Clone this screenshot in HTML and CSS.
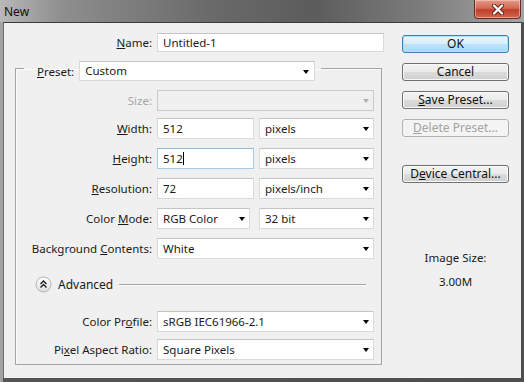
FILE: index.html
```html
<!DOCTYPE html>
<html lang="en">
<head>
    <meta charset="UTF-8">
    <meta name="viewport" content="width=device-width, initial-scale=1.0">
    <title>New</title>
    <link rel="stylesheet" href="styles.css">
</head>
<body>
    <div class="window">
        <div class="titlebar">
            <span class="title">New</span>
            <div class="close">
                <svg width="14" height="11" viewBox="0 0 14 11">
                    <path d="M3 1.5 L11 9.5 M11 1.5 L3 9.5" stroke="#5a1a10" stroke-width="4" stroke-linecap="round"/>
                    <path d="M3 1.5 L11 9.5 M11 1.5 L3 9.5" stroke="#fff" stroke-width="2.4" stroke-linecap="round"/>
                </svg>
            </div>
        </div>

        <div class="client">
            <!-- Form column -->
            <div class="main">
                <div class="name-row">
                    <label class="lbl"><u>N</u>ame:</label>
                    <div class="field">Untitled-1</div>
                </div>

                <fieldset class="group">
                    <legend class="preset">
                        <label class="lbl-inline"><u>P</u>reset:</label>
                        <div class="combo combo-preset">Custom</div>
                    </legend>

                    <div class="row row-size">
                        <label class="lbl disabled">Size:</label>
                        <div class="combo combo-full combo-disabled"></div>
                    </div>
                    <div class="row">
                        <label class="lbl"><u>W</u>idth:</label>
                        <div class="pair">
                            <div class="field field-num">512</div>
                            <div class="combo combo-unit">pixels</div>
                        </div>
                    </div>
                    <div class="row">
                        <label class="lbl"><u>H</u>eight:</label>
                        <div class="pair">
                            <div class="field field-num focused">512<span class="caret"></span></div>
                            <div class="combo combo-unit">pixels</div>
                        </div>
                    </div>
                    <div class="row">
                        <label class="lbl"><u>R</u>esolution:</label>
                        <div class="pair">
                            <div class="field field-num">72</div>
                            <div class="combo combo-unit">pixels/inch</div>
                        </div>
                    </div>
                    <div class="row">
                        <label class="lbl">Color <u>M</u>ode:</label>
                        <div class="pair">
                            <div class="combo combo-mode">RGB Color</div>
                            <div class="combo combo-unit">32 bit</div>
                        </div>
                    </div>
                    <div class="row">
                        <label class="lbl">Background <u>C</u>ontents:</label>
                        <div class="combo combo-full">White</div>
                    </div>

                    <div class="advanced">
                        <svg class="adv-icon" width="17" height="17" viewBox="0 0 17 17">
                            <defs>
                                <linearGradient id="advg" x1="0" y1="0" x2="0" y2="1">
                                    <stop offset="0" stop-color="#ffffff"/>
                                    <stop offset="1" stop-color="#dcdcdc"/>
                                </linearGradient>
                            </defs>
                            <circle cx="8.5" cy="8.5" r="7.5" fill="url(#advg)" stroke="#b4b4b4"/>
                            <path d="M5.5 8 L8.5 5 L11.5 8 M5.5 11.5 L8.5 8.5 L11.5 11.5" fill="none" stroke="#1a1a1a" stroke-width="1.3"/>
                        </svg>
                        <span class="adv-text">Advanced</span>
                        <span class="adv-line"></span>
                    </div>

                    <div class="row row-tight">
                        <label class="lbl">Color Pr<u>o</u>file:</label>
                        <div class="combo combo-full">sRGB IEC61966-2.1</div>
                    </div>
                    <div class="row row-last">
                        <label class="lbl">Pi<u>x</u>el Aspect Ratio:</label>
                        <div class="combo combo-full">Square Pixels</div>
                    </div>
                </fieldset>
            </div>

            <!-- Button column -->
            <div class="side">
                <button class="btn btn-default">OK</button>
                <button class="btn">Cancel</button>
                <button class="btn"><u>S</u>ave Preset...</button>
                <button class="btn btn-disabled"><u>D</u>elete Preset...</button>
                <button class="btn btn-device">D<u>e</u>vice Central...</button>

                <div class="image-size">
                    <div>Image Size:</div>
                    <div class="image-size-value">3.00M</div>
                </div>
            </div>
        </div>
    </div>
</body>
</html>
```

FILE: styles.css
```css
body {
    margin: 0;
    font-family: "Noto Sans", "Open Sans", sans-serif;
    font-size: 11.5px;
    color: #1a1a1a;
}
.window {
    width: 524px;
    height: 382px;
    box-sizing: border-box;
    display: flex;
    flex-direction: column;
    background: linear-gradient(to right, #a2a2a2 0, #a2a2a2 3px, #545454 3px, #4e4e4e 100%);
}
.titlebar {
    height: 22px;
    display: flex;
    align-items: flex-start;
    justify-content: space-between;
    flex-shrink: 0;
    background: linear-gradient(to right, #b8b8b8 0%, #8e8e8e 12%, #6a6a6a 40%, #5c5c5c 60%, #7c7c7c 80%, #a4a4a4 100%);
}
.title {
    margin: 5px 0 0 4px;
    font-size: 12px;
    line-height: 13px;
    color: #111;
}
.close {
    width: 47px;
    height: 19px;
    margin-right: 3px;
    box-sizing: border-box;
    border: 1px solid #6b2a20;
    border-top: none;
    border-radius: 0 0 4px 4px;
    background: linear-gradient(#e39a8a 0%, #d26a55 45%, #c0402a 55%, #d4664c 100%);
    box-shadow: inset 0 0 0 1px rgba(255, 220, 210, 0.5);
    display: flex;
    align-items: center;
    justify-content: center;
}
.client {
    flex: 1;
    margin: 0 3px 4px 3px;
    background: #f0f0f0;
    border-top: 1px solid #3a3a3a;
    border-left: 1px solid #6a6a6a;
    display: flex;
    padding-top: 10px;
}
.main {
    width: 386px;
    padding-left: 11px;
    box-sizing: border-box;
}
.name-row {
    display: grid;
    grid-template-columns: 137px 227px;
    column-gap: 5px;
    align-items: center;
}
.lbl {
    text-align: right;
    white-space: nowrap;
}
.lbl-inline {
    margin-right: 5px;
}
.disabled {
    color: #a6a6a6;
}
.field, .combo {
    height: 20px;
    box-sizing: border-box;
    background: #fff;
    border: 1px solid #dadada;
    border-top-color: #c4c4c4;
    padding-left: 5px;
    line-height: 18px;
    white-space: nowrap;
}
.name-row .field {
    height: 19px;
    line-height: 17px;
}
.field-num {
    width: 97px;
    height: 21px;
    line-height: 19px;
}
.focused {
    border-color: #a9cbe6;
    border-top-color: #8fb8dc;
}
.caret {
    display: inline-block;
    width: 1px;
    height: 13px;
    background: #000;
    vertical-align: -2px;
}
.combo {
    position: relative;
    height: 21px;
    line-height: 19px;
}
.combo::after {
    content: "";
    position: absolute;
    right: 4px;
    top: 8px;
    border-left: 3.5px solid transparent;
    border-right: 3.5px solid transparent;
    border-top: 4px solid #000;
}
.combo-preset {
    width: 236px;
    height: 20px;
    line-height: 18px;
}
.combo-preset::after {
    right: 5px;
}
.combo-full {
    width: 217px;
}
.combo-unit {
    width: 115px;
}
.combo-mode {
    width: 93px;
    margin-right: 9px;
}
.combo-disabled {
    background: #f0f0f0;
    border-color: #c9c9c9;
}
.combo-disabled::after {
    border-top-color: #b0b0b0;
}
.group {
    width: 367px;
    margin: 3px 0 0 0;
    padding: 0 0 4px 0;
    box-sizing: border-box;
    border: 1px solid #a4a4a4;
    box-shadow: inset 1px 1px 0 #fbfbfb;
    min-inline-size: 0;
}
.preset {
    display: flex;
    align-items: center;
    margin-left: 8px;
    padding: 6px 6px 0 13px;
}
.row {
    display: grid;
    grid-template-columns: 136px 217px;
    column-gap: 5px;
    align-items: center;
    margin-top: 9px;
}
.row-size {
    margin-top: 9px;
    margin-bottom: -2px;
}
.row-tight {
    margin-top: 18px;
}
.row-last {
    margin-top: 7px;
}
.pair {
    display: flex;
    justify-content: space-between;
}
.advanced {
    display: flex;
    align-items: center;
    margin: 16px 15px 0 19px;
    height: 18px;
}
.adv-icon {
    flex-shrink: 0;
}
.adv-text {
    margin-left: 6px;
    font-size: 12px;
}
.adv-line {
    flex: 1;
    margin-left: 6px;
    height: 1px;
    background: #a4a4a4;
    box-shadow: 0 1px 0 #fbfbfb;
}
.side {
    flex: 1;
    padding: 2px 0 0 12px;
    display: flex;
    flex-direction: column;
    align-items: flex-start;
}
.btn {
    width: 107px;
    height: 18px;
    margin-bottom: 10px;
    padding: 0;
    font-family: inherit;
    font-size: 12px;
    line-height: 14px;
    color: #111;
    border: 1px solid #707070;
    border-radius: 3px;
    background: linear-gradient(#f3f3f3 0%, #ebebeb 48%, #dcdcdc 52%, #cfcfcf 100%);
    box-shadow: inset 0 0 0 1px #fafafa;
}
.btn-default {
    border-color: #3c7fb1;
    background: linear-gradient(#e9f6fd 0%, #d8effc 48%, #bde5fc 52%, #a6d8f4 100%);
    box-shadow: inset 0 0 0 1px #b0e2fb;
}
.btn-disabled {
    color: #a3a3a3;
    border-color: #b0b4b7;
    background: #f4f4f4;
    box-shadow: none;
}
.btn-device {
    margin-top: 18px;
}
.image-size {
    width: 107px;
    margin-top: 58px;
    text-align: center;
    line-height: 14px;
}
.image-size-value {
    margin-top: 10px;
}
```
